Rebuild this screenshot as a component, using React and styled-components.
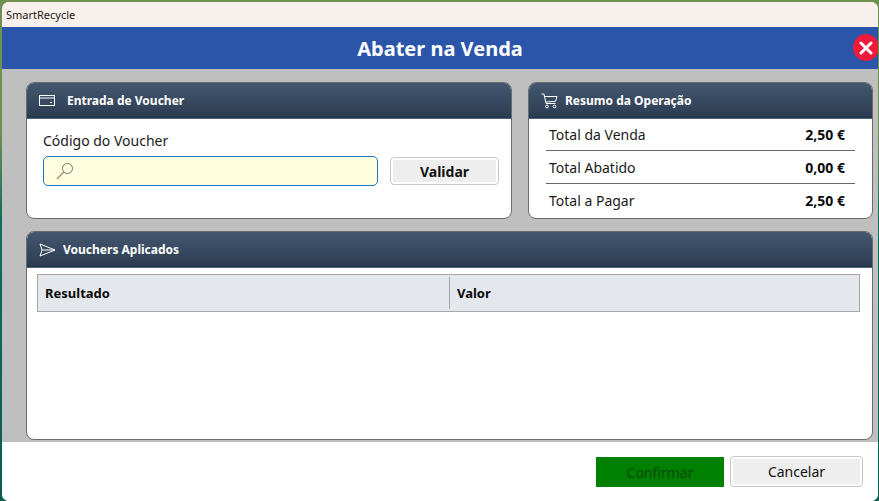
import React from "react";
import styled, { createGlobalStyle } from "styled-components";

const Global = createGlobalStyle`
  html, body { margin: 0; padding: 0; }
  body { width: 879px; height: 501px; overflow: hidden; font-family: "Noto Sans", "Open Sans", sans-serif; }
  * { box-sizing: border-box; }
`;
const Desktop = styled.div`
  width: 879px; height: 501px; padding: 2px 1px 0 2px;
  background: linear-gradient(180deg, #6f9150 0, #6f9150 26%, #0d6f5c 44%, #0a5c4c 100%);
`;
const Win = styled.div`
  width: 876px; height: 499px; display: flex; flex-direction: column;
  border-radius: 7px 7px 7px 7px; overflow: hidden; background: #fff;
`;
const TitleBar = styled.div`
  height: 25px; flex: none; background: #f7f0eb; color: #1a1a1a;
  font-size: 11px; line-height: 25px; padding-left: 4px; font-family: "Noto Sans", sans-serif;
`;
const Banner = styled.div`
  height: 42px; flex: none; background: #2a55a9; color: #fff; position: relative;
  display: flex; align-items: center; justify-content: center;
  font-size: 20px; font-weight: 700;
`;
const CloseBtn = styled.div`
  position: absolute; right: -1px; top: 7px; width: 26px; height: 27px; border-radius: 50%;
  background: #ee1a3a; display: flex; align-items: center; justify-content: center;
`;
const Content = styled.div`
  flex: none; height: 373px; background: #bfbfbf; padding: 13px 5px 0 24px;
  display: flex; flex-direction: column; gap: 12px;
`;
const TopRow = styled.div`
  display: grid; grid-template-columns: 486px 345px; gap: 16px; height: 137px;
`;
const Card = styled.section`
  background: #fff; border: 1px solid #6b6b6b; border-radius: 8px; overflow: hidden;
  display: flex; flex-direction: column; height: ${p => p.$h || "auto"};
`;
const CardHead = styled.header`
  height: 36px; flex: none; display: flex; align-items: center; gap: ${p => p.$gap || 12}px;
  padding-left: ${p => p.$pad || 12}px; color: #fff; font-size: 12px; font-weight: 700;
  background: linear-gradient(180deg, #44576f 0%, #2d3e54 92%, #27364a 100%);
  border-bottom: 1px solid #4e6478;
`;
const VoucherBody = styled.div`padding: 12px 12px 0 16px;`;
const Label = styled.div`font-size: 14px; line-height: 20px; color: #1a1a1a;`;
const InputRow = styled.div`display: flex; align-items: center; gap: 12px; margin-top: 5px;`;
const InputBox = styled.div`
  width: 335px; height: 30px; flex: none; background: #ffffe0; border: 1px solid #1a75c9;
  border-radius: 5px; padding-left: 12px; display: flex; align-items: center;
`;
const GhostBtn = styled.button`
  font-family: inherit; color: #111; background: #eeeeee; border: 1px solid #c8c8c8;
  box-shadow: inset 0 0 0 2px #fff; border-radius: 4px; padding: 0;
  width: ${p => p.$w}px; height: ${p => p.$h}px; font-size: 14px; font-weight: ${p => p.$bold ? 700 : 400};
`;
const Summary = styled.div`padding: 0 17px; flex: 1; display: flex; flex-direction: column;`;
const SumRow = styled.div`
  height: 33px; flex: none; padding: 0 10px 0 3px; display: flex; align-items: center; justify-content: space-between;
  font-size: 14px; color: #1a1a1a; border-bottom: ${p => p.$last ? "none" : "1px solid #666"};
  margin-top: ${p => p.$first ? "-1px" : "0"};
`;
const Amount = styled.span`font-weight: 700; color: #0a0a0a;`;
const GridBody = styled.div`padding: 6px 12px 0 10px; flex: 1;`;
const GridHead = styled.div`
  height: 38px; display: grid; grid-template-columns: 412px 1fr; background: #e4e8ec;
  border: 1px solid #a6a6a6; border-right-color: #a6a6a6;
`;
const GridCol = styled.div`
  display: flex; align-items: center; padding-left: ${p => p.$pad}px; font-size: 13px; font-weight: 700; color: #0a0a0a;
  border-right: ${p => p.$divider ? "1px solid #a8a8a8" : "none"}; margin: 2px 0;
`;
const Footer = styled.footer`
  flex: 1; background: #fff; display: flex; justify-content: flex-end; align-items: flex-start;
  gap: 6px; padding: 14px 15px 0 0;
`;
const ConfirmBtn = styled.button`
  width: 128px; height: 30px; margin-top: 1px; background: #008000; color: #0a4a0a; border: none; padding: 0;
  font-family: inherit; font-size: 14px;
`;

const IconCard = () => (
  <svg width="16" height="12" viewBox="0 0 16 12" fill="none" stroke="#fff" strokeWidth="1">
    <rect x="0.5" y="0.5" width="15" height="10" /><path d="M0.5 3H15.5M11 7.5h2" />
  </svg>
);
const IconCart = () => (
  <svg width="17" height="16" viewBox="0 0 17 16" fill="none" stroke="#fff" strokeWidth="1">
    <path d="M0.5 1H3l2 9.5h9.5M3.6 3.5H16l-1.4 4.8-9.6.7" /><circle cx="6" cy="13.5" r="1.4" /><circle cx="13.5" cy="13.5" r="1.4" />
  </svg>
);
const IconSend = () => (
  <svg width="17" height="14" viewBox="0 0 17 14" fill="none" stroke="#fff" strokeWidth="1">
    <path d="M1 1l15 6-15 6 2-6zM3 7h13" />
  </svg>
);
const IconSearch = () => (
  <svg width="18" height="18" viewBox="0 0 18 18" fill="none">
    <circle cx="11.5" cy="6.5" r="5" stroke="#777" strokeWidth="1" />
    <path d="M7.8 10L1 17" stroke="#a08a60" strokeWidth="1.2" />
  </svg>
);
const IconX = () => (
  <svg width="14" height="14" viewBox="0 0 14 14" stroke="#fff" strokeWidth="3" strokeLinecap="round">
    <path d="M2 2l10 10M12 2L2 12" />
  </svg>
);

export default function App() {
  return (
    <Desktop>
      <Global />
      <Win>
        <TitleBar>SmartRecycle</TitleBar>
        <Banner>
          Abater na Venda
          <CloseBtn><IconX /></CloseBtn>
        </Banner>
        <Content>
          <TopRow>
            <Card>
              <CardHead><IconCard />Entrada de Voucher</CardHead>
              <VoucherBody>
                <Label>Código do Voucher</Label>
                <InputRow>
                  <InputBox><IconSearch /></InputBox>
                  <GhostBtn $w={109} $h={28} $bold>Validar</GhostBtn>
                </InputRow>
              </VoucherBody>
            </Card>
            <Card>
              <CardHead $pad={12} $gap={7}><IconCart />Resumo da Operação</CardHead>
              <Summary>
                <SumRow $first><span>Total da Venda</span><Amount>2,50 €</Amount></SumRow>
                <SumRow><span>Total Abatido</span><Amount>0,00 €</Amount></SumRow>
                <SumRow $last><span>Total a Pagar</span><Amount>2,50 €</Amount></SumRow>
              </Summary>
            </Card>
          </TopRow>
          <Card $h="209px">
            <CardHead $gap={7}><IconSend />Vouchers Aplicados</CardHead>
            <GridBody>
              <GridHead>
                <GridCol $pad={7} $divider>Resultado</GridCol>
                <GridCol $pad={7}>Valor</GridCol>
              </GridHead>
            </GridBody>
          </Card>
        </Content>
        <Footer>
          <ConfirmBtn>Confirmar</ConfirmBtn>
          <GhostBtn $w={133} $h={31}>Cancelar</GhostBtn>
        </Footer>
      </Win>
    </Desktop>
  );
}
